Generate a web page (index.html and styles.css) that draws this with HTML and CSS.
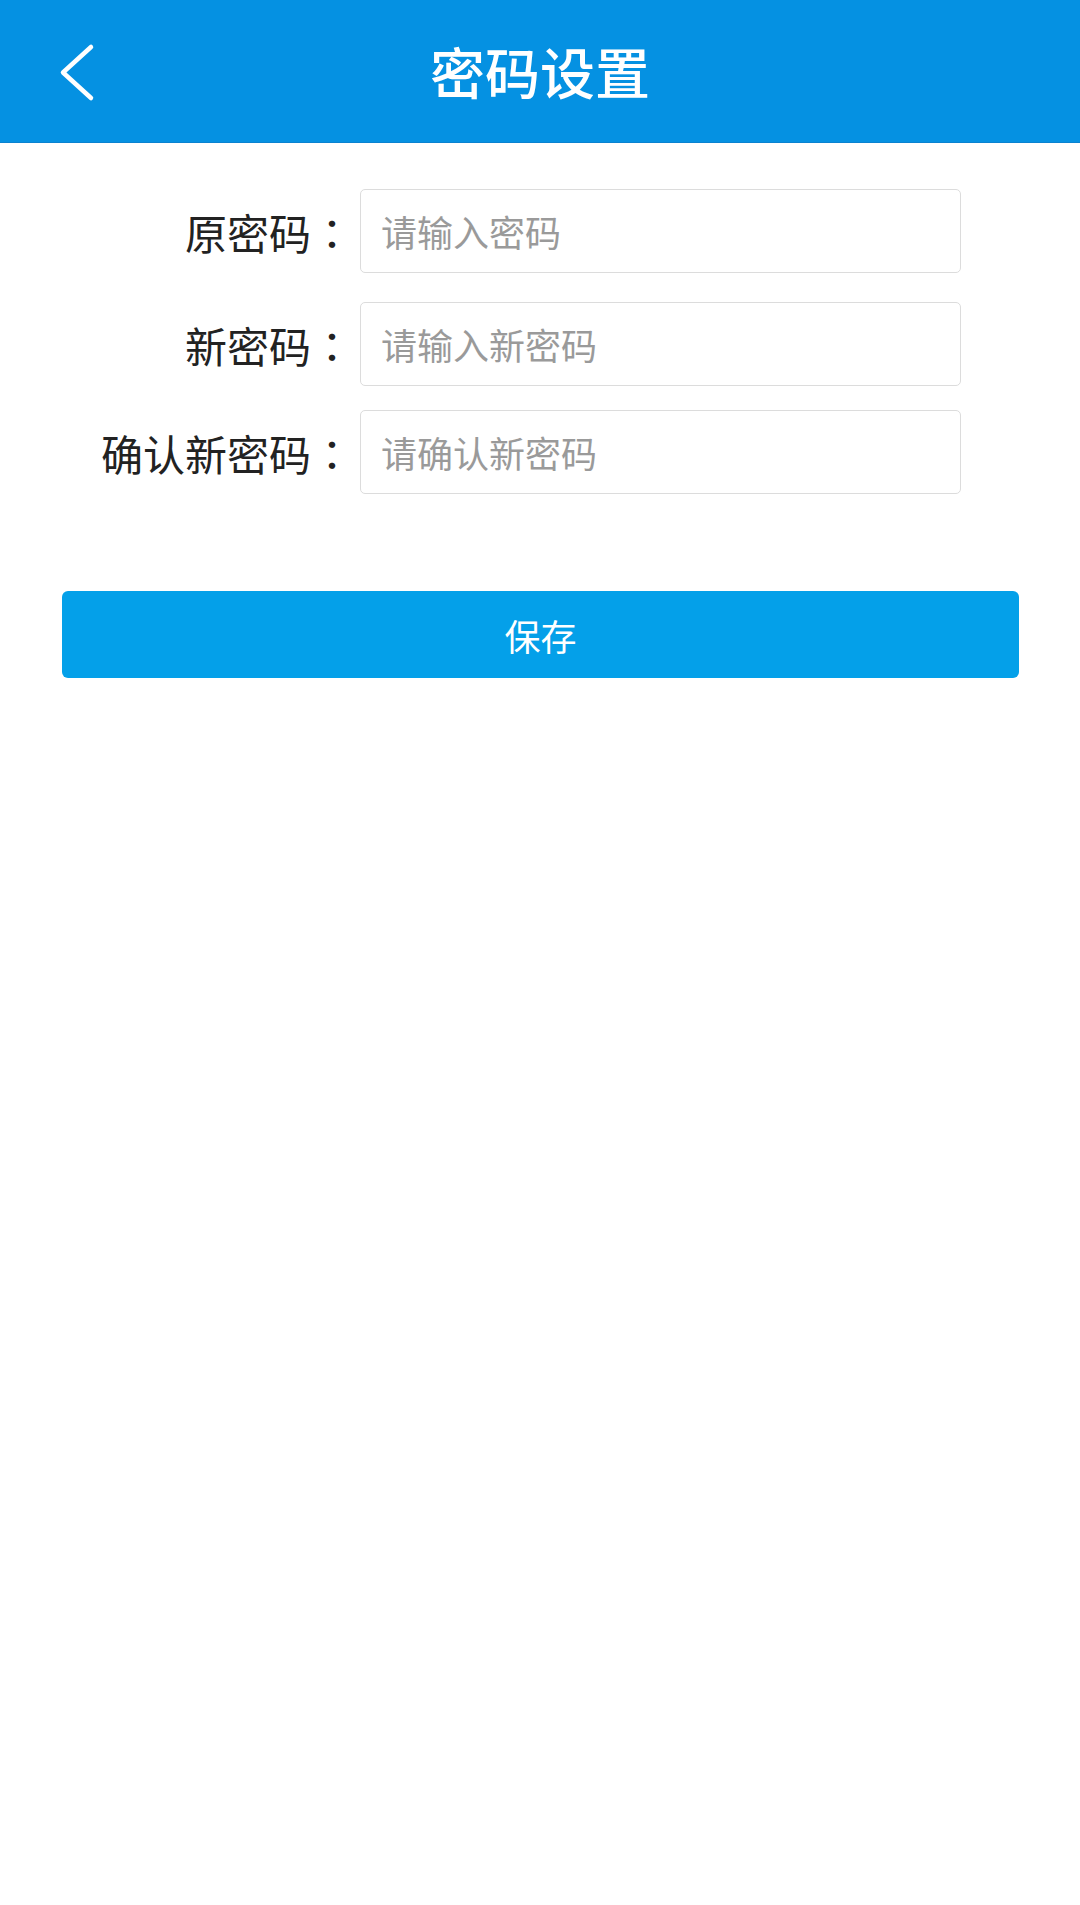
FILE: index.html
```html
<!DOCTYPE html>
<html lang="zh-CN">
<head>
    <meta charset="UTF-8">
    <meta name="viewport" content="width=device-width, initial-scale=1.0">
    <title>密码设置</title>
    <link rel="stylesheet" href="styles.css">
</head>
<body>

    <!-- Top bar -->
    <div class="topbar">
        <div class="back">
            <svg width="40" height="60" viewBox="0 0 40 60">
                <path d="M33 5 L5 30.5 L33 56" fill="none" stroke="#fff" stroke-width="4.5" stroke-linecap="round" stroke-linejoin="round"/>
            </svg>
        </div>
        <h1 class="title">密码设置</h1>
        <div></div>
    </div>

    <!-- Password form -->
    <div class="form">
        <div class="row row-old">
            <label class="label">原密码<span class="colon" lang="zh-TW">：</span></label>
            <input type="password" class="field" placeholder="请输入密码">
        </div>
        <div class="row row-new">
            <label class="label">新密码<span class="colon" lang="zh-TW">：</span></label>
            <input type="password" class="field" placeholder="请输入新密码">
        </div>
        <div class="row row-confirm">
            <label class="label">确认新密码<span class="colon" lang="zh-TW">：</span></label>
            <input type="password" class="field" placeholder="请确认新密码">
        </div>
    </div>

    <button class="save">保存</button>

</body>
</html>
```

FILE: styles.css
```css
body {
    margin: 0;
    background: #fff;
    font-family: "Noto Sans CJK SC", "Noto Sans", sans-serif;
}
.topbar {
    height: 142px;
    background-color: #0591e2;
    border-bottom: 1px solid #0a82d0;
    display: grid;
    grid-template-columns: 1fr auto 1fr;
    align-items: center;
}
.back {
    padding-left: 58px;
    padding-top: 2px;
    display: flex;
}
.title {
    margin: 0;
    color: #fff;
    font-size: 55px;
    font-weight: 500;
    line-height: 1;
    padding-bottom: 2px;
}
.form {
    padding-top: 46px;
}
.row {
    display: flex;
    align-items: center;
}
.row-new {
    margin-top: 29px;
}
.row-confirm {
    margin-top: 24px;
}
.label {
    width: 353px;
    text-align: right;
    font-size: 42px;
    color: #222;
    white-space: nowrap;
}
.colon {
    font-family: "Noto Sans CJK TC", sans-serif;
}
.field {
    margin-left: 7px;
    width: 601px;
    height: 84px;
    box-sizing: border-box;
    border: 1px solid #dcdcdc;
    border-radius: 5px;
    padding: 0 20px;
    font-family: "Noto Sans CJK SC", sans-serif;
    font-size: 36px;
    color: #333;
    outline: none;
}
.field::placeholder {
    color: #9a9a9a;
}
.save {
    display: block;
    margin: 97px 61px 0 62px;
    width: 957px;
    height: 87px;
    border: none;
    border-radius: 6px;
    background-color: #04a0e9;
    color: #fff;
    font-family: "Noto Sans CJK SC", sans-serif;
    font-size: 36px;
    cursor: pointer;
}
```
